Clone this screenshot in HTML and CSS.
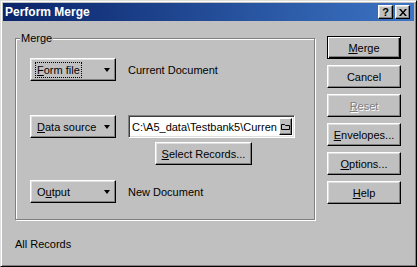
FILE: index.html
```html
<!DOCTYPE html>
<html lang="en">
<head>
  <meta charset="UTF-8">
  <title>Perform Merge</title>
  <link rel="stylesheet" href="styles.css">
</head>
<body>

  <div class="window">
    <div class="titlebar">
      <span class="title">Perform Merge</span>
      <div class="caption-buttons">
        <span class="cap-btn help">?</span>
        <span class="cap-btn">
          <svg width="8" height="7" viewBox="0 0 8 7">
            <path d="M0 0h2l2 2.5 2-2.5h2l-3 3.5 3 3.5h-2l-2-2.5-2 2.5h-2l3-3.5z" fill="#000"/>
          </svg>
        </span>
      </div>
    </div>

    <div class="content">
      <div class="main">
        <fieldset class="group">
          <legend>Merge</legend>

          <div class="row">
            <button class="btn drop"><span class="focus"><u>F</u>orm file</span><i class="arrow"></i></button>
            <span class="label">Current Document</span>
          </div>

          <div class="row source">
            <button class="btn drop"><span><u>D</u>ata source</span><i class="arrow"></i></button>
            <div class="field">
              <span class="path">C:\A5_data\Testbank5\Curren</span>
              <span class="browse">
                <svg width="9" height="7" viewBox="0 0 9 7">
                  <path d="M0.5 1.5v5h8v-4h-4l-1-1z" fill="none" stroke="#000"/>
                </svg>
              </span>
            </div>
          </div>

          <div class="row select">
            <button class="btn plain"><u>S</u>elect Records...</button>
          </div>

          <div class="row output">
            <button class="btn drop"><span>O<u>u</u>tput</span><i class="arrow"></i></button>
            <span class="label">New Document</span>
          </div>
        </fieldset>

        <div class="status">All Records</div>
      </div>

      <div class="actions">
        <button class="btn default"><u>M</u>erge</button>
        <button class="btn">Cancel</button>
        <button class="btn disabled"><u>R</u>eset</button>
        <button class="btn"><u>E</u>nvelopes...</button>
        <button class="btn"><u>O</u>ptions...</button>
        <button class="btn"><u>H</u>elp</button>
      </div>
    </div>
  </div>

</body>
</html>
```

FILE: styles.css
```css
* {
  box-sizing: border-box;
}

body {
  margin: 0;
  background: #c0c0c0;
  font-family: 'Liberation Sans', Arial, sans-serif;
  font-size: 11px;
  color: #000;
}

.window {
  width: 417px;
  height: 267px;
  padding: 2px;
  background: #c0c0c0;
  border: 1px solid;
  border-color: #dfdfdf #000 #000 #dfdfdf;
  box-shadow: inset 1px 1px #fff, inset -1px -1px #808080;
  display: flex;
  flex-direction: column;
}

.titlebar {
  height: 18px;
  display: flex;
  align-items: center;
  padding: 0 4px 0 2px;
  background: linear-gradient(to right, #0a246a, #3c74c4);
  color: #fff;
}

.title {
  font-weight: bold;
  font-size: 12px;
}

.caption-buttons {
  margin-left: auto;
  display: flex;
  gap: 2px;
}

.cap-btn {
  width: 15px;
  height: 14px;
  background: #c0c0c0;
  border: 1px solid;
  border-color: #fff #000 #000 #fff;
  box-shadow: inset -1px -1px #808080, inset 1px 1px #dfdfdf;
  display: flex;
  align-items: center;
  justify-content: center;
  color: #000;
}

.cap-btn.help {
  font-weight: bold;
  font-size: 11px;
  line-height: 1;
}

.content {
  flex: 1;
  display: flex;
  padding: 11px 13px 0 12px;
}

.main {
  width: 300px;
}

.group {
  margin: 0;
  padding: 13px 14px 16px;
  border: 1px solid #808080;
  box-shadow: inset 1px 1px #fff, 1px 1px #fff;
}

.group legend {
  margin-left: -10px;
  padding: 0 1px;
  line-height: 13px;
  background: #c0c0c0;
}

.row {
  display: flex;
  align-items: center;
  gap: 12px;
  height: 23px;
}

.row.source {
  margin-top: 34px;
}

.row.select {
  margin-top: 4px;
  padding-left: 125px;
}

.row.output {
  margin-top: 15px;
}

.btn {
  font: inherit;
  color: #000;
  height: 23px;
  padding: 0;
  background: #c0c0c0;
  border: 1px solid;
  border-color: #fff #000 #000 #fff;
  box-shadow: inset -1px -1px #808080, inset 1px 1px #dfdfdf;
}

.btn.drop {
  width: 86px;
  flex: none;
  display: flex;
  align-items: center;
  justify-content: space-between;
  padding: 0 5px 0 4px;
}

.btn.drop span {
  padding: 1px;
  border: 1px dotted transparent;
}

.btn.drop .focus {
  border-color: #000;
}

.arrow {
  width: 0;
  height: 0;
  border-left: 3.5px solid transparent;
  border-right: 3.5px solid transparent;
  border-top: 4px solid #000;
}

.btn.plain {
  width: 97px;
}

.label {
  white-space: nowrap;
}

.field {
  width: 167px;
  height: 23px;
  display: flex;
  align-items: center;
  padding: 2px 2px 2px 3px;
  background: #fff;
  border: 1px solid;
  border-color: #808080 #fff #fff #808080;
  box-shadow: inset 1px 1px #404040, inset -1px -1px #dfdfdf;
}

.path {
  flex: 1;
  white-space: nowrap;
}

.browse {
  width: 13px;
  height: 17px;
  flex: none;
  display: flex;
  align-items: center;
  justify-content: center;
  background: #c0c0c0;
  border: 1px solid;
  border-color: #fff #000 #000 #fff;
  box-shadow: inset -1px -1px #808080;
}

.status {
  margin-top: 18px;
  line-height: 13px;
}

.actions {
  width: 74px;
  margin-left: 12px;
  padding-top: 4px;
  display: flex;
  flex-direction: column;
  gap: 6px;
}

.actions .btn {
  width: 74px;
}

.btn.default {
  border-color: #000;
  box-shadow: inset 1px 1px #fff, inset -1px -1px #000, inset -2px -2px #808080;
}

.btn.disabled {
  color: #808080;
  text-shadow: 1px 1px #fff;
}
```
